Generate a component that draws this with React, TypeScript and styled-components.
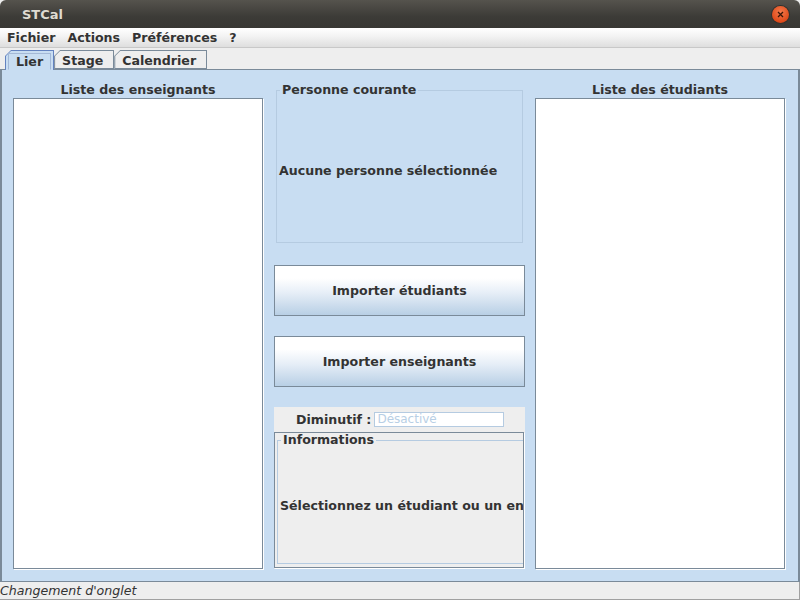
import React from "react";
import styled, { createGlobalStyle } from "styled-components";

const Global = createGlobalStyle`
  html, body { margin: 0; padding: 0; background: #ffffff; }
  body { width: 800px; height: 600px; overflow: hidden; font-family: "DejaVu Sans", sans-serif; }
  * { box-sizing: border-box; }
`;

const FS = "12.6px";

const Window = styled.div`
  width: 800px;
  height: 600px;
  display: flex;
  flex-direction: column;
  background: #eeeeee;
`;

const TitleBar = styled.div`
  height: 28px;
  flex: none;
  display: flex;
  align-items: center;
  justify-content: space-between;
  padding: 0 11px 0 22px;
  background: linear-gradient(#55534d, #3c3b37 60%, #383733);
  border-radius: 6px 6px 0 0;
`;

const Title = styled.span`
  font-family: "DejaVu Sans", sans-serif;
  font-weight: bold;
  font-size: 13px;
  color: #dfdbd2;
`;

const CloseButton = styled.div`
  width: 17px;
  height: 17px;
  border-radius: 50%;
  background: radial-gradient(circle at 50% 35%, #f47a4c, #df4a1a 70%, #c63d10);
  display: flex;
  align-items: center;
  justify-content: center;
  box-shadow: 0 0 0 1px #33312d;
`;

const MenuBar = styled.div`
  height: 20px;
  flex: none;
  display: flex;
  align-items: center;
  padding-left: 7px;
  gap: 12px;
  background: linear-gradient(#ffffff, #f4f4f4 40%, #dedede);
  border-bottom: 1px solid #c8c8c8;
`;

const MenuItem = styled.span`
  font-weight: bold;
  font-size: ${FS};
  color: #333333;
`;

const TabStrip = styled.div`
  height: 21px;
  flex: none;
  display: flex;
  align-items: flex-end;
  padding-left: 5px;
  background: #eeeeee;
  position: relative;
  z-index: 1;
`;

const TabOuter = styled.div<{ $active?: boolean }>`
  padding: 1px 1px ${(p) => (p.$active ? "0" : "1px")} 1px;
  background: ${(p) => (p.$active ? "#6382bf" : "#7a8a99")};
  clip-path: polygon(0 6px, 6px 0, 100% 0, 100% 100%, 0 100%);
  margin-bottom: ${(p) => (p.$active ? "-1px" : "0")};
  height: ${(p) => (p.$active ? "20px" : "19px")};
`;

const TabInner = styled.div<{ $active?: boolean }>`
  height: 100%;
  display: flex;
  align-items: center;
  padding: ${(p) => (p.$active ? "1px 9px 0 9px" : "1px 10px 0 7px")};
  background: ${(p) => (p.$active ? "#c8ddf2" : "#eeeeee")};
  clip-path: polygon(0 5px, 5px 0, 100% 0, 100% 100%, 0 100%);
  font-weight: bold;
  font-size: ${FS};
  color: #333333;
`;

const FocusRing = styled.span`
  padding: 0 7px;
  margin: 0 -7px;
  line-height: 15px;
  border: 1px solid #a3b8d6;
  border-bottom-color: #c8ddf2;
`;

const Content = styled.div`
  flex: 1;
  display: grid;
  grid-template-columns: 250px 250px 250px;
  column-gap: 11px;
  padding: 0 13px 12px 11px;
  background: #c8ddf2;
  border: 1px solid #7a8a99;
  border-left-width: 2px;
  border-right-width: 2px;
`;

const ListColumn = styled.div`
  display: flex;
  flex-direction: column;
  padding-top: 12px;
`;

const ListTitle = styled.div`
  height: 16px;
  text-align: center;
  font-weight: bold;
  font-size: ${FS};
  color: #333333;
  line-height: 16px;
`;

const ListBox = styled.div`
  flex: 1;
  background: #ffffff;
  border: 1px solid #7a8a99;
  box-shadow: 1px 1px 0 #ffffff;
`;

const MiddleColumn = styled.div`
  display: flex;
  flex-direction: column;
  padding-top: 20px;
  min-width: 0;
`;

const TitledBox = styled.div<{ $bg: string; $top: number }>`
  position: relative;
  flex: 1;
  border: 1px solid #b5cbe1;
  display: flex;
  align-items: center;
  padding: ${(p) => p.$top}px 0 0 2px;
  min-width: 0;
  --legend-bg: ${(p) => p.$bg};
`;

const CurrentBox = styled(TitledBox)`
  flex: none;
  height: 153px;
  margin: 0 1px 0 2px;
`;

const Legend = styled.span`
  position: absolute;
  top: -9px;
  left: 3px;
  padding: 0 2px;
  background: var(--legend-bg);
  font-weight: bold;
  font-size: ${FS};
  color: #333333;
  line-height: 16px;
`;

const Label = styled.span`
  font-weight: bold;
  font-size: ${FS};
  color: #333333;
  white-space: nowrap;
`;

const BigButton = styled.button<{ $top: number }>`
  flex: none;
  margin-top: ${(p) => p.$top}px;
  height: 51px;
  width: 251px;
  border: 1px solid #7a8a99;
  background: linear-gradient(#ffffff 0%, #ffffff 25%, #e6eef7 55%, #b8cfe5 100%);
  font-family: "DejaVu Sans", sans-serif;
  font-weight: bold;
  font-size: ${FS};
  color: #333333;
  padding: 0;
`;

const GrayPanel = styled.div`
  margin-top: 20px;
  flex: 1;
  width: 251px;
  background: #eeeeee;
  display: flex;
  flex-direction: column;
`;

const FieldRow = styled.div`
  height: 25px;
  flex: none;
  display: flex;
  align-items: center;
  padding-left: 22px;
  gap: 3px;
`;

const TextField = styled.div`
  width: 130px;
  height: 15px;
  background: #ffffff;
  border: 1px solid #b5cbe1;
  font-size: 12px;
  line-height: 13px;
  padding-left: 2px;
  color: #b8cfe5;
`;

const InfoOuter = styled.div`
  flex: 1;
  margin: 0 1px 1px 0;
  border: 1px solid #7a8a99;
  box-shadow: 1px 1px 0 #ffffff;
  overflow: hidden;
  padding: 7px 0 3px 2px;
  display: flex;
`;

const InfoBox = styled(TitledBox)`
  margin-right: -20px;
`;

const StatusBar = styled.div`
  height: 18px;
  flex: none;
  display: flex;
  align-items: center;
  font-style: italic;
  font-size: ${FS};
  color: #333333;
  background: #eeeeee;
  border-bottom: 1px solid #a0a0a0;
  border-right: 1px solid #a0a0a0;
`;

export default function App() {
  return (
    <>
      <Global />
      <Window>
        <TitleBar>
          <Title>STCal</Title>
          <CloseButton>
            <svg width="7" height="7" viewBox="0 0 7 7">
              <path d="M1 1L6 6M6 1L1 6" stroke="#3a1608" strokeWidth="1.3" />
            </svg>
          </CloseButton>
        </TitleBar>
        <MenuBar>
          <MenuItem>Fichier</MenuItem>
          <MenuItem>Actions</MenuItem>
          <MenuItem>Préférences</MenuItem>
          <MenuItem>?</MenuItem>
        </MenuBar>
        <TabStrip>
          <TabOuter $active>
            <TabInner $active>
              <FocusRing>Lier</FocusRing>
            </TabInner>
          </TabOuter>
          <TabOuter>
            <TabInner>Stage</TabInner>
          </TabOuter>
          <TabOuter>
            <TabInner>Calendrier</TabInner>
          </TabOuter>
        </TabStrip>
        <Content>
          <ListColumn>
            <ListTitle>Liste des enseignants</ListTitle>
            <ListBox />
          </ListColumn>
          <MiddleColumn>
            <CurrentBox $bg="#c8ddf2" $top={8}>
              <Legend>Personne courante</Legend>
              <Label>Aucune personne sélectionnée</Label>
            </CurrentBox>
            <BigButton $top={22}>Importer étudiants</BigButton>
            <BigButton $top={20}>Importer enseignants</BigButton>
            <GrayPanel>
              <FieldRow>
                <Label>Diminutif :</Label>
                <TextField>Désactivé</TextField>
              </FieldRow>
              <InfoOuter>
                <InfoBox $bg="#eeeeee" $top={6}>
                  <Legend>Informations</Legend>
                  <Label>Sélectionnez un étudiant ou un enseignant</Label>
                </InfoBox>
              </InfoOuter>
            </GrayPanel>
          </MiddleColumn>
          <ListColumn>
            <ListTitle>Liste des étudiants</ListTitle>
            <ListBox />
          </ListColumn>
        </Content>
        <StatusBar>Changement d'onglet</StatusBar>
      </Window>
    </>
  );
}
